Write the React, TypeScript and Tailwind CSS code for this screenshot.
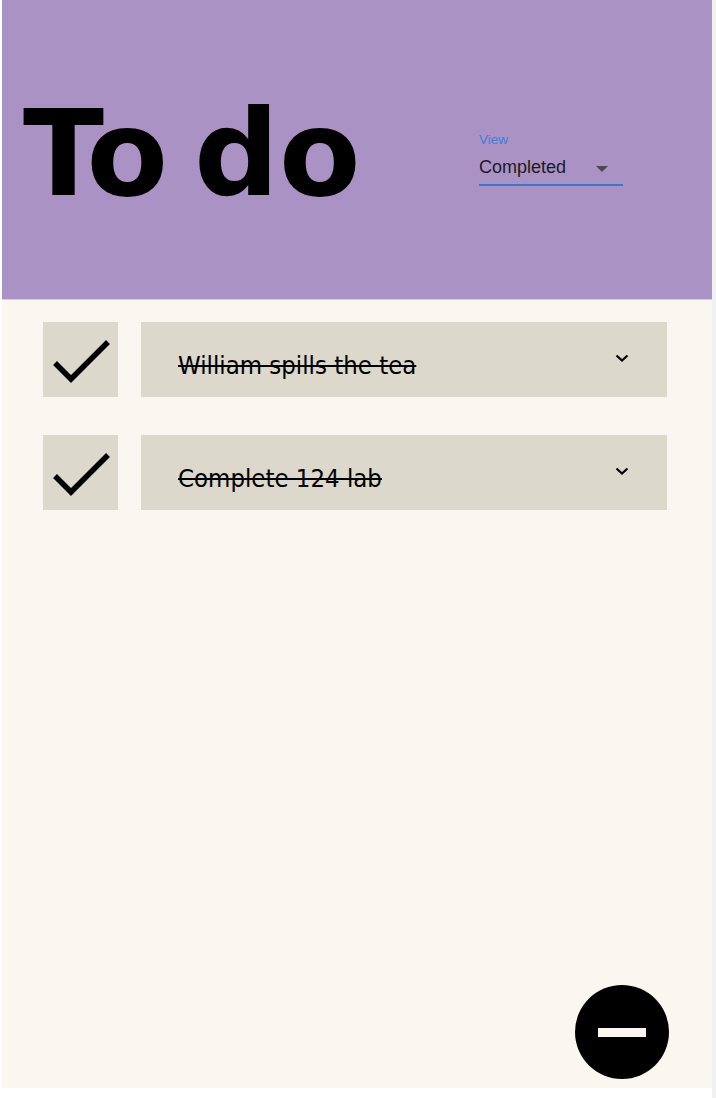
import { useState } from 'react';

interface Todo {
    id: number;
    title: string;
    done: boolean;
}

const todos: Todo[] = [
    { id: 1, title: 'William spills the tea', done: true },
    { id: 2, title: 'Complete 124 lab', done: true },
];

function CheckBox() {
    return (
        <div className="w-[75px] h-[75px] shrink-0 bg-[#dcd8cc] flex items-center justify-center">
            <svg width="75" height="75" viewBox="0 0 75 75" fill="none">
                <path d="M12 41 L28 57 L65 20" stroke="#000" strokeWidth="5.5" strokeLinecap="butt" strokeLinejoin="miter" />
            </svg>
        </div>
    );
}

function TodoRow({ todo }: { todo: Todo }) {
    return (
        <div className="flex gap-[23px]">
            <CheckBox />
            <div className="flex-1 h-[75px] bg-[#dcd8cc] flex items-center pl-[37px] pr-[38px] pt-[12px]">
                <span
                    className="flex-1 text-[25.5px] leading-none text-black line-through"
                    style={{ fontFamily: '"DejaVu Sans Condensed", "DejaVu Sans", sans-serif', fontStretch: 'condensed' }}
                >
                    {todo.title}
                </span>
                <svg width="14" height="10" viewBox="0 0 14 10" className="-mt-[15px]" fill="none">
                    <path d="M1.5 2.5 L7 7.5 L12.5 2.5" stroke="#000" strokeWidth="2.2" />
                </svg>
            </div>
        </div>
    );
}

export default function App() {
    const [view] = useState('Completed');

    return (
        <div className="flex h-[1098px] bg-white" style={{ fontFamily: '"Liberation Sans", Arial, sans-serif' }}>
            <div className="w-[2px] shrink-0 bg-white"></div>
            <div className="w-[710px] shrink-0 h-[1088px] flex flex-col relative bg-[#faf7f0]">
                <header className="h-[300px] shrink-0 bg-[#aa93c4] border-b border-[#dccbe6] flex items-start pl-[21px]">
                    <h1
                        className="mt-[94px] text-[120px] leading-none font-bold text-black scale-x-[1.1] origin-left [word-spacing:-14px]"
                        style={{ fontFamily: '"DejaVu Sans Condensed", "DejaVu Sans", sans-serif', fontStretch: 'condensed' }}
                    >
                        To do
                    </h1>
                    <div className="ml-auto mr-[89px] mt-[133px] w-[144px]">
                        <div className="text-[13.5px] leading-[14px] text-[#3d7fd9]">View</div>
                        <div className="relative mt-[8px] pb-[5px] border-b-2 border-[#3a78d0]">
                            <div className="text-[18px] leading-[24px] text-[#1c1a1f]">{view}</div>
                            <svg width="12" height="6" viewBox="0 0 12 6" className="absolute right-[15px] top-[11px]">
                                <path d="M0 0 L12 0 L6 6 Z" fill="#4f4557" />
                            </svg>
                        </div>
                    </div>
                </header>

                <main className="flex-1 flex flex-col gap-[38px] pt-[22px] pl-[41px] pr-[45px]">
                    {todos.map((todo) => (
                        <TodoRow key={todo.id} todo={todo} />
                    ))}
                </main>

                <button className="absolute right-[43px] bottom-[9px] w-[94px] h-[94px] rounded-full bg-black flex items-center justify-center">
                    <span className="block w-[48px] h-[9px] bg-[#faf7f0]"></span>
                </button>
            </div>
            <div className="w-[4px] shrink-0 bg-[#f0f1f3]"></div>
        </div>
    );
}
